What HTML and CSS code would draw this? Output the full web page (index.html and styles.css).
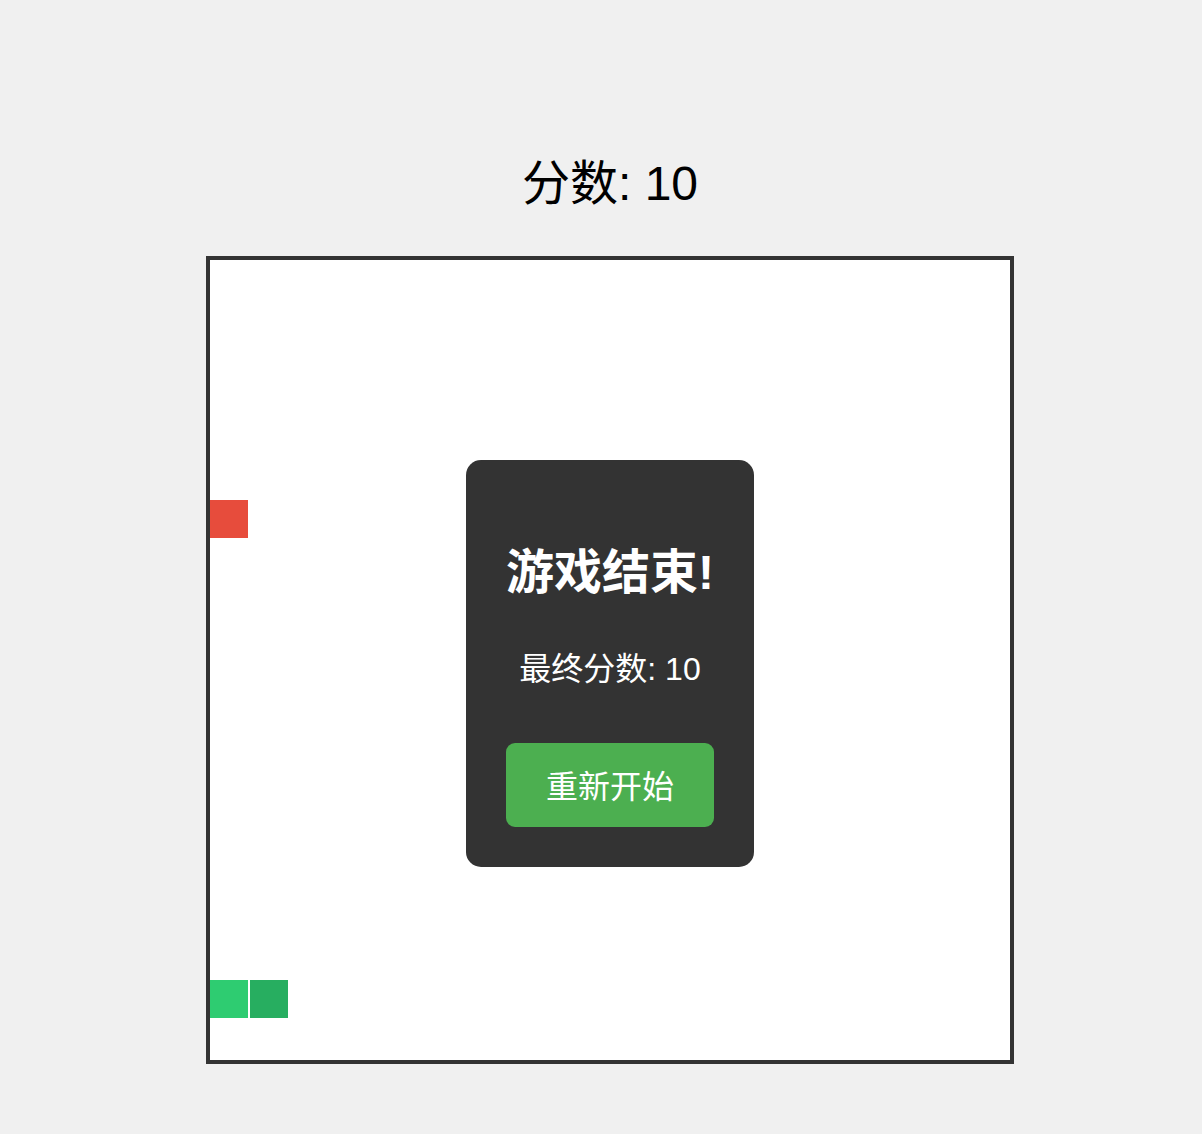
FILE: index.html
```html
<!DOCTYPE html>
<html lang="zh-CN">
<head>
<meta charset="utf-8">
<title>贪吃蛇</title>
<link rel="stylesheet" href="styles.css">
</head>
<body>
<div class="page">
  <h1 class="score">分数: 10</h1>
  <div class="board">
    <div class="cell food" style="left:0px;top:240px"></div>
    <div class="cell head" style="left:0px;top:720px"></div>
    <div class="cell body" style="left:40px;top:720px"></div>
    <div class="overlay">
      <h2 class="over-title">游戏结束!</h2>
      <p class="final">最终分数: 10</p>
      <button class="restart">重新开始</button>
    </div>
  </div>
</div>
</body>
</html>
```

FILE: styles.css
```css
html, body {
  margin: 0;
  padding: 0;
  background: #f0f0f0;
}
body {
  font-family: "Liberation Sans", "Noto Sans CJK SC", sans-serif;
  color: #000;
}
.page {
  display: flex;
  flex-direction: column;
  align-items: center;
  padding: 156px 0 0 18px;
}
.score {
  margin: 0 0 44px;
  font-size: 48px;
  font-weight: normal;
  line-height: 56px;
}
.board {
  position: relative;
  width: 800px;
  height: 800px;
  background: #fff;
  border: 4px solid #333;
}
.cell {
  position: absolute;
  width: 38px;
  height: 38px;
}
.food { background: #e74c3c; }
.head { background: #2ecc71; }
.body { background: #27ae60; }
.overlay {
  position: absolute;
  left: 256px;
  top: 200px;
  width: 208px;
  padding: 40px;
  background: #333;
  border-radius: 15px;
  color: #fff;
  text-align: center;
}
.over-title {
  margin: 42px 0 0;
  font-size: 48px;
  font-weight: bold;
  line-height: 62px;
}
.final {
  margin: 43px 0 0;
  font-size: 32px;
  line-height: 44px;
}
.restart {
  display: block;
  box-sizing: border-box;
  width: 208px;
  height: 84px;
  margin: 52px 0 0;
  padding: 4px 0 0;
  border: none;
  border-radius: 9px;
  background: #4caf50;
  color: #fff;
  font-family: "Liberation Sans", "Noto Sans CJK SC", sans-serif;
  font-size: 32px;
  line-height: 44px;
}
```
